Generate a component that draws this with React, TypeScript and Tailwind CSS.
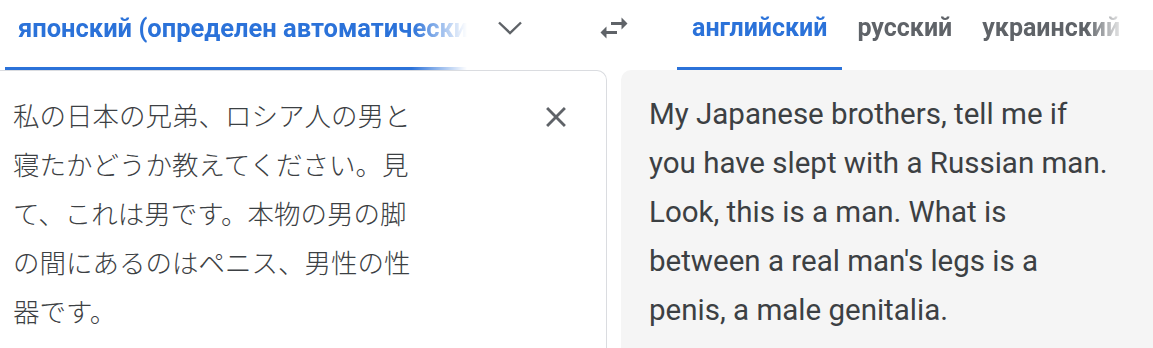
const sourceLines = [
  "私の日本の兄弟、ロシア人の男と",
  "寝たかどうか教えてください。見",
  "て、これは男です。本物の男の脚",
  "の間にあるのはペニス、男性の性",
  "器です。",
];

const targetLines = [
  "My Japanese brothers, tell me if",
  "you have slept with a Russian man.",
  "Look, this is a man. What is",
  "between a real man's legs is a",
  "penis, a male genitalia.",
];

const tabs = [
  { label: "английский", active: true },
  { label: "русский", active: false },
  { label: "украинский", active: false },
];

function ChevronDown() {
  return (
    <svg width="24" height="14" viewBox="0 0 24 14" fill="none">
      <polyline points="1,1.5 12,12 23,1.5" stroke="#5f6368" strokeWidth="2.4" />
    </svg>
  );
}

function SwapIcon() {
  return (
    <svg width="36" height="36" viewBox="0 0 24 24" fill="#5f6368">
      <path d="M6.99 11L3 15l3.99 4v-3H14v-2H6.99v-3zM21 9l-3.99-4v3H10v2h7.01v3L21 9z" />
    </svg>
  );
}

function CloseIcon() {
  return (
    <svg width="34" height="34" viewBox="0 0 24 24" fill="#5f6368">
      <path d="M19 6.41L17.59 5 12 10.59 6.41 5 5 6.41 10.59 12 5 17.59 6.41 19 12 13.41 17.59 19 19 17.59 13.41 12z" />
    </svg>
  );
}

export default function App() {
  return (
    <div className="w-[1153px] h-[348px] overflow-hidden bg-white font-['Roboto','Liberation_Sans',sans-serif]">
      <div className="flex h-[70px]">
        <div className="relative ml-[5px] w-[462px] flex items-center pb-[14px] pl-[13px] overflow-hidden [mask-image:linear-gradient(to_right,black_88%,transparent_100%)]">
          <span className="whitespace-nowrap text-[25.5px] leading-[28px] font-bold text-[#2b72d9]">
            японский (определен автоматически)
          </span>
          <div className="absolute left-0 right-0 bottom-0 h-[3px] bg-[#2b72d9]" />
        </div>
        <div className="w-[85px] flex items-center justify-center pb-[14px]">
          <ChevronDown />
        </div>
        <div className="w-[124px] flex items-center justify-center pb-[14px]">
          <SwapIcon />
        </div>
        <div className="ml-[1px] flex w-[450px] overflow-hidden [mask-image:linear-gradient(to_right,black_91%,transparent_100%)]">
          {tabs.map((t) => (
            <div key={t.label} className="relative flex items-center px-[15px] pb-[14px]">
              <span
                className={`whitespace-nowrap text-[25px] leading-[28px] font-bold ${t.active ? "text-[#2b72d9]" : "text-[#5f6368]"}`}
              >
                {t.label}
              </span>
              {t.active && <div className="absolute left-0 right-0 bottom-0 h-[3px] bg-[#2b72d9]" />}
            </div>
          ))}
        </div>
      </div>

      <div className="flex h-[278px]">
        <div className="w-[607px] flex border-t border-r border-[#dadce0] rounded-tr-[10px] pl-[13px] pr-[26px] pt-[19px]">
          <div className="flex-1 font-['Noto_Sans_CJK_JP',sans-serif] text-[26.5px] leading-[49px] text-[#3c4043] font-light">
            {sourceLines.map((l) => (
              <div key={l} className="whitespace-nowrap">{l}</div>
            ))}
          </div>
          <div className="w-[48px] h-[48px] mt-[3px] flex items-center justify-center">
            <CloseIcon />
          </div>
        </div>
        <div className="flex-1 ml-[14px] bg-[#f5f5f5] rounded-tl-[10px] pl-[28px] pt-[20px]">
          <div className="text-[29.5px] leading-[49px] text-[#3c4043]">
            {targetLines.map((l) => (
              <div key={l} className="whitespace-nowrap">{l}</div>
            ))}
          </div>
        </div>
      </div>
    </div>
  );
}
